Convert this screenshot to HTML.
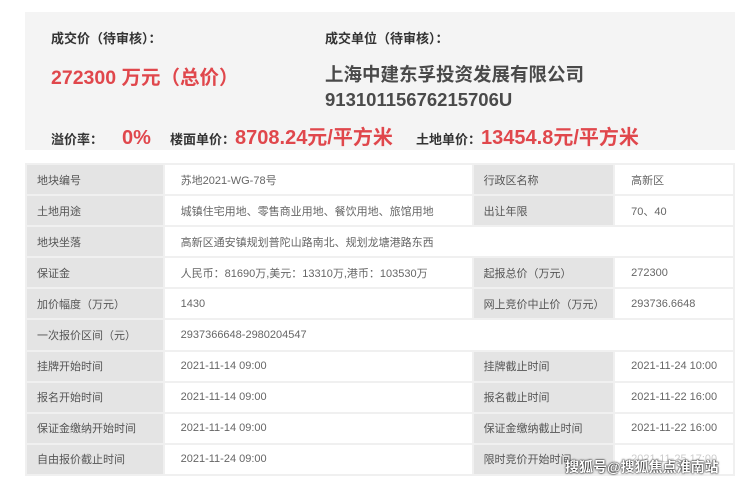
<!DOCTYPE html>
<html><head><meta charset="utf-8"><style>
body{margin:0;width:740px;height:481px;background:#fff;font-family:"Liberation Sans","Noto Sans CJK SC",sans-serif;position:relative;overflow:hidden}
.panel{position:absolute;left:25px;top:12px;width:710px;height:138px;background:#f4f4f4}
.t{position:absolute;white-space:nowrap}
.lab{font-size:13px;font-weight:bold;color:#333}
.red{color:#e0474c;font-weight:bold}
.co{font-size:18.5px;font-weight:bold;color:#4a4a4a}
.row{position:absolute;left:51px;top:121px;display:flex;align-items:baseline;white-space:nowrap}
.row .red{font-size:20px}
table{position:absolute;left:25px;top:163px;width:710px;border-collapse:collapse;font-size:11px;color:#666}
td{height:31.1px;padding:0 0 0 16px;border:2px solid #f0f0f0;box-sizing:border-box}
td.l{background:#e4e4e4;color:#555;padding-left:10px}
</style></head><body>
<div class="panel"></div>
<div class="t lab" style="left:51px;top:28px">成交价（待审核）：</div>
<div class="t lab" style="left:325px;top:28px">成交单位（待审核）：</div>
<div class="t red" style="left:51px;top:61px;font-size:19.5px">272300 万元（总价）</div>
<div class="t co" style="left:325px;top:61px">上海中建东孚投资发展有限公司</div>
<div class="t co" style="left:325px;top:89px">91310115676215706U</div>
<div class="row">
<span class="lab" style="width:71px">溢价率：</span><span class="red" style="width:48px">0%</span>
<span class="lab">楼面单价：</span><span class="red" style="width:181px">8708.24元/平方米</span>
<span class="lab">土地单价：</span><span class="red">13454.8元/平方米</span>
</div>
<table>
<colgroup><col style="width:138px"><col style="width:310px"><col style="width:142px"><col style="width:120px"></colgroup>
<tr><td class="l">地块编号</td><td>苏地2021-WG-78号</td><td class="l">行政区名称</td><td>高新区</td></tr>
<tr><td class="l">土地用途</td><td>城镇住宅用地、零售商业用地、餐饮用地、旅馆用地</td><td class="l">出让年限</td><td>70、40</td></tr>
<tr><td class="l">地块坐落</td><td colspan="3">高新区通安镇规划普陀山路南北、规划龙塘港路东西</td></tr>
<tr><td class="l">保证金</td><td>人民币：81690万,美元：13310万,港币：103530万</td><td class="l">起报总价（万元）</td><td>272300</td></tr>
<tr><td class="l">加价幅度（万元）</td><td>1430</td><td class="l">网上竞价中止价（万元）</td><td>293736.6648</td></tr>
<tr><td class="l">一次报价区间（元）</td><td colspan="3">2937366648-2980204547</td></tr>
<tr><td class="l">挂牌开始时间</td><td>2021-11-14 09:00</td><td class="l">挂牌截止时间</td><td>2021-11-24 10:00</td></tr>
<tr><td class="l">报名开始时间</td><td>2021-11-14 09:00</td><td class="l">报名截止时间</td><td>2021-11-22 16:00</td></tr>
<tr><td class="l">保证金缴纳开始时间</td><td>2021-11-14 09:00</td><td class="l">保证金缴纳截止时间</td><td>2021-11-22 16:00</td></tr>
<tr><td class="l">自由报价截止时间</td><td>2021-11-24 09:00</td><td class="l">限时竞价开始时间</td><td style="color:#ccc">2021-11-25 17:00</td></tr>
</table>
<div class="t" style="left:565px;top:457px;font-size:14px;font-weight:bold;color:#fff;text-shadow:0 0 2px #000,0 0 1px #000">搜狐号@搜狐焦点淮南站</div>
</body></html>
